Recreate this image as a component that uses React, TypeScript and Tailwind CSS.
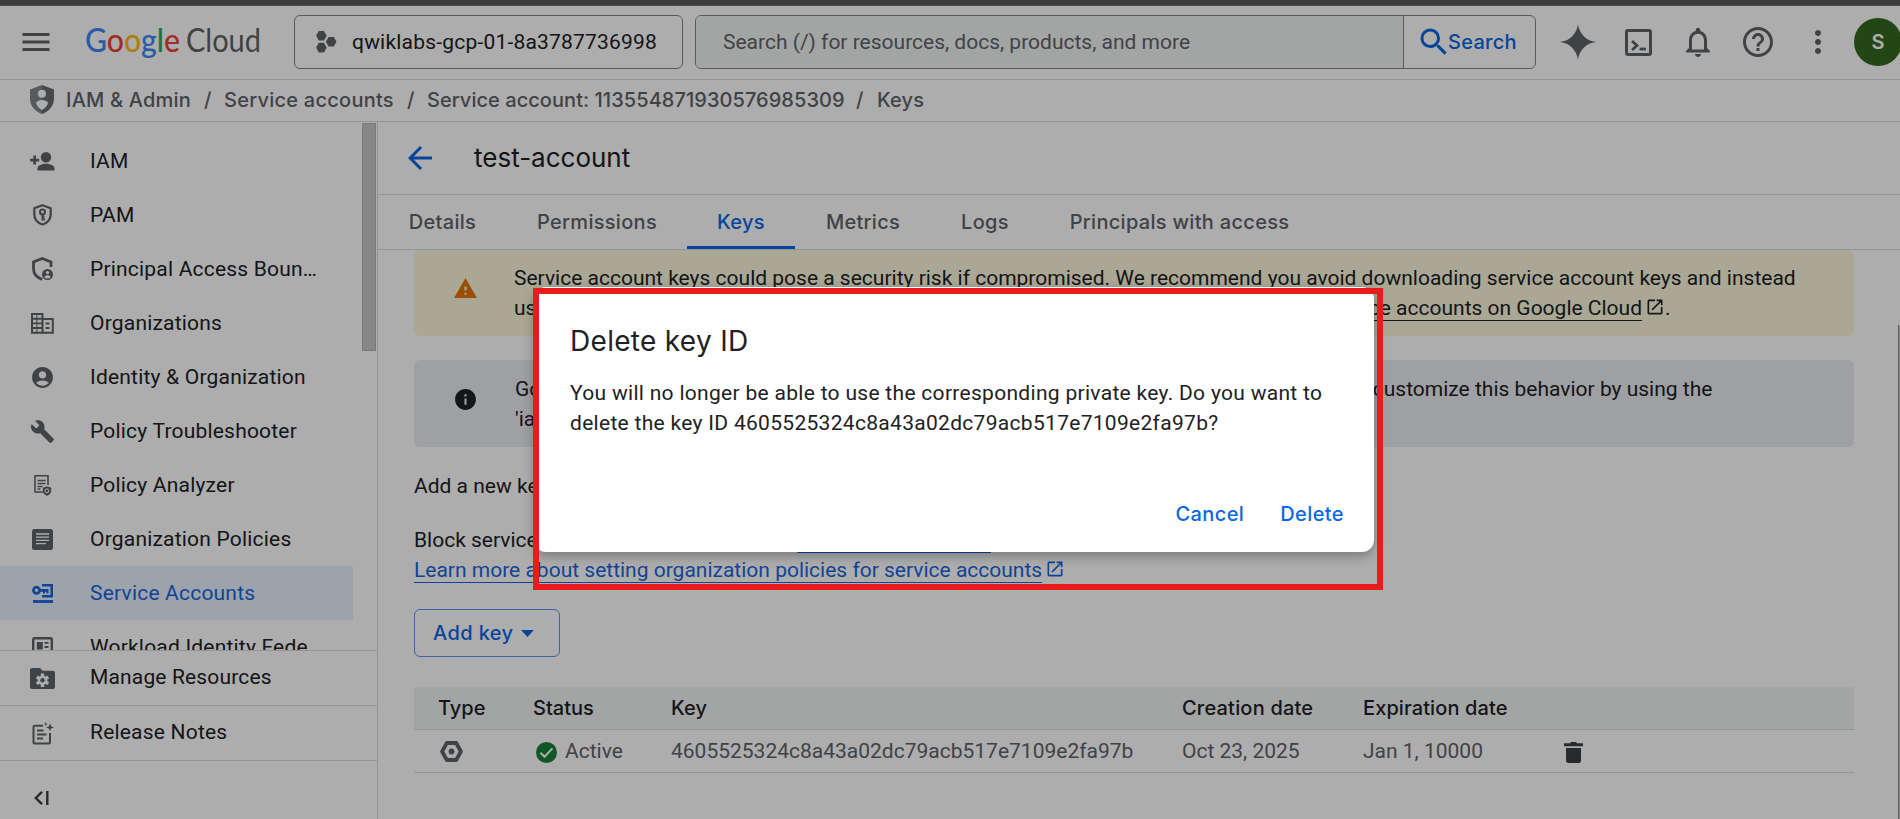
import type { ReactNode } from "react";
import {
  MdAccountCircle,
  MdArrowBack,
  MdBuild,
  MdHelpOutline,
  MdInfo,
  MdMenu,
  MdMoreVert,
  MdNotificationsNone,
  MdOpenInNew,
  MdSearch,
  MdWarning,
} from "react-icons/md";

function GoogleCloudLogo() {
  return (
    <svg width="180" height="44" viewBox="0 0 180 44" className="block">
      <g fontFamily="Lato, sans-serif" fontSize="32">
        <text x="-1" y="31.500" textLength="95" lengthAdjust="spacingAndGlyphs" fontWeight="500" stroke="none">
          <tspan fill="#4285f4">G</tspan>
          <tspan fill="#ea4335">o</tspan>
          <tspan fill="#fbbc04">o</tspan>
          <tspan fill="#4285f4">g</tspan>
          <tspan fill="#34a853">l</tspan>
          <tspan fill="#ea4335">e</tspan>
        </text>
        <text x="100" y="31.500" textLength="75" lengthAdjust="spacingAndGlyphs" fill="#5f6368">
          Cloud
        </text>
      </g>
    </svg>
  );
}

function ProjectIcon() {
  return (
    <svg width="21" height="22" viewBox="0 0 21 22" fill="#5f6368" className="block">
      <path d="M2.8 0h5.2l2.7 4.8-2.7 4.8H2.8L.1 4.8z" />
      <path d="M2.8 11.8h5.2l2.7 4.8-2.7 4.8H2.8L.1 16.6z" />
      <path d="M12.6 5.9h5.2l2.7 4.8-2.7 4.8h-5.2l-2.7-4.8z" />
    </svg>
  );
}

function SparkIcon() {
  return (
    <svg width="36" height="36" viewBox="0 0 36 36" fill="#5f6368" className="block">
      <path d="M18 0C18.9 9.4 26.6 17.1 36 18 26.6 18.9 18.9 26.6 18 36 17.1 26.6 9.4 18.9 0 18 9.4 17.1 17.1 9.4 18 0z" />
      <path d="M18 5.5C20 12.400 23.600 16 30.500 18 23.600 20 20 23.600 18 30.500 16 23.600 12.400 20 5.500 18 12.400 16 16 12.400 18 5.500z" />
    </svg>
  );
}

function TerminalIcon() {
  return (
    <svg width="27" height="27" viewBox="0 0 27 27" fill="none" stroke="#5f6368" className="block">
      <rect x="1.500" y="1.500" width="24" height="24" rx="1.500" strokeWidth="3" />
      <path d="M7 12l5 4.500-5 4.500" strokeWidth="2.800" />
      <path d="M14.500 20h6.500" strokeWidth="2.800" />
    </svg>
  );
}

function ShieldUserIcon() {
  return (
    <svg width="24" height="29" viewBox="0 0 24 29" className="block">
      <path d="M12 0L0 4.600v9.200C0 20.800 5 26.600 12 29z" fill="#80868b" />
      <path d="M12 0l12 4.600v9.200C24 20.800 19 26.600 12 29z" fill="#686d72" />
      <circle cx="12" cy="8.800" r="4" fill="#fff" />
      <path d="M6 17.800c1.200-1.800 3.400-2.800 6-2.800s4.800 1 6 2.800c-.8 3.200-2.800 5.600-6 7.200-3.200-1.600-5.200-4-6-7.200z" fill="#fff" />
    </svg>
  );
}

function IamIcon() {
  return (
    <svg width="25" height="19" viewBox="0 0 25 19" fill="#5f6368" className="block">
      <circle cx="16" cy="5.300" r="5.200" />
      <path d="M7.500 18.500v-2.300c0-2.800 4.600-4.400 8.500-4.400s8.500 1.600 8.500 4.400v2.300z" />
      <path d="M3.300 3.500h2.700v3.200h3.200v2.700H6v3.200H3.300V9.400H.1V6.700h3.200z" />
    </svg>
  );
}

function PamIcon() {
  return (
    <svg width="21" height="22" viewBox="0 0 21 22" fill="none" stroke="#5f6368" className="block">
      <path d="M10.500 1.200l8.200 3.100v6c0 4.800-3.300 8.700-8.200 10.200-4.900-1.500-8.200-5.400-8.200-10.200v-6z" strokeWidth="2.200" />
      <circle cx="10.500" cy="8" r="2.500" strokeWidth="2.100" />
      <path d="M10.500 10.500v6M10.500 15.500h2.500M10.500 12.800h2" strokeWidth="2" />
    </svg>
  );
}

function BoundaryIcon() {
  return (
    <svg width="21" height="24" viewBox="0 0 21 24" className="block">
      <path
        d="M19 10V5L10.200 1.500 1.500 5v6.500c0 5 3.300 9 8.700 11"
        fill="none"
        stroke="#5f6368"
        strokeWidth="2.800"
      />
      <circle cx="15.500" cy="17.500" r="5.500" fill="#5f6368" />
      <circle cx="15.500" cy="15.600" r="1.600" fill="#fff" />
      <path d="M12.300 20c.7-1.100 1.900-1.700 3.200-1.700s2.500.6 3.200 1.700c-.7 1-1.900 1.600-3.200 1.600s-2.500-.6-3.200-1.600z" fill="#fff" />
    </svg>
  );
}

function OrganizationsIcon() {
  return (
    <svg width="23" height="21" viewBox="0 0 23 21" fill="none" stroke="#5f6368" strokeWidth="2" className="block">
      <path d="M1 1h10.500v18.800H1zM11.500 6h10.300v13.800H11.500" />
      <path d="M2 5.800h9M2 10.400h9M2 15h9" strokeWidth="1.900" />
      <path d="M5.900 1v18.800" strokeWidth="1" />
      <path d="M14.500 10.400h4M14.500 15h4" />
    </svg>
  );
}

function AnalyzerIcon() {
  return (
    <svg width="21" height="22" viewBox="0 0 21 22" fill="none" stroke="#5f6368" className="block">
      <path d="M16 11V1.800H3V18h8" strokeWidth="1.600" />
      <path d="M5.500 6.500h8M5.500 9.500h8M5.500 12.500h5M5.500 15h3" strokeWidth="1.300" />
      <path d="M15 12.200l4.200 1.500v3c0 2.300-1.700 4.200-4.200 5-2.500-.8-4.200-2.700-4.200-5v-3z" fill="#5f6368" stroke="none" />
      <circle cx="15" cy="16.800" r="1.900" stroke="#fff" strokeWidth="1" />
    </svg>
  );
}

function PoliciesIcon() {
  return (
    <svg width="21" height="21" viewBox="0 0 21 21" className="block">
      <rect width="21" height="21" rx="2.500" fill="#5f6368" />
      <path d="M4 5h13M4 8.200h13M4 11.400h13M4 14.600h10" stroke="#fff" strokeWidth="1.300" />
    </svg>
  );
}

function ServiceAccountsIcon() {
  return (
    <svg width="21" height="19" viewBox="0 0 21 19" className="block">
      <path d="M10 1.300h9.700v10.900H10" fill="none" stroke="#1a65dc" strokeWidth="2.600" />
      <circle cx="4.500" cy="6.300" r="3.100" fill="none" stroke="#1a65dc" strokeWidth="2.700" />
      <path d="M7.500 5h9v4.500h-2V7.800h-1.500v1.700h-2V7.800H7.500z" fill="#1a65dc" />
      <path d="M1 17.500h20" stroke="#1a65dc" strokeWidth="2.800" />
    </svg>
  );
}

function WorkloadIcon() {
  return (
    <svg width="21" height="21" viewBox="0 0 21 21" className="block">
      <rect x="1.200" y="1.200" width="18.600" height="18.600" rx="1.500" fill="none" stroke="#5f6368" strokeWidth="2.400" />
      <rect x="4.800" y="5" width="6" height="7.500" fill="#5f6368" />
      <path d="M12.500 5.800h4M12.500 10h4" stroke="#5f6368" strokeWidth="1.800" />
    </svg>
  );
}

function FolderGearIcon() {
  return (
    <svg width="25" height="21" viewBox="0 0 25 21" className="block">
      <path d="M2 0h8l2.600 2.800H23a2 2 0 0 1 2 2V19a2 2 0 0 1-2 2H2a2 2 0 0 1-2-2V2a2 2 0 0 1 2-2z" fill="#5f6368" />
      <g stroke="#fff" strokeWidth="3.400">
        <path d="M12.500 5.600v13.400M6.700 8.950l11.600 6.700M18.300 8.950l-11.600 6.700" />
      </g>
      <circle cx="12.500" cy="12.300" r="4.600" fill="#fff" />
      <circle cx="12.500" cy="12.300" r="2.200" fill="#5f6368" />
    </svg>
  );
}

function ReleaseNotesIcon() {
  return (
    <svg width="22" height="23" viewBox="0 0 22 23" fill="none" stroke="#5f6368" className="block">
      <path d="M11 3.800H2.500a1 1 0 0 0-1 1V20.500a1 1 0 0 0 1 1h14.500a1 1 0 0 0 1-1V11" strokeWidth="2" />
      <path d="M5 8.500h6.500M5 12.500h9.500M5 16.500h6" strokeWidth="2" />
      <path d="M18 1.500l1.100 2.800 2.800 1.100-2.800 1.100L18 9.300l-1.100-2.800-2.800-1.100 2.800-1.100z" fill="#5f6368" stroke="none" />
      <path d="M13.800 0l.6 1.400 1.400.6-1.400.6-.6 1.400-.6-1.400-1.400-.6 1.400-.6z" fill="#5f6368" stroke="none" />
    </svg>
  );
}

function CollapseIcon() {
  return (
    <svg width="15" height="14" viewBox="0 0 15 14" fill="none" stroke="#3c4043" strokeWidth="2.400" className="block">
      <path d="M8 .8L1.800 7 8 13.200M13.300 0v14" />
    </svg>
  );
}

function KeyTypeIcon() {
  return (
    <svg width="23" height="21" viewBox="0 0 23 21" className="block">
      <path d="M6.800 2h9.400l4.700 8.500-4.700 8.500H6.800L2.100 10.500z" fill="none" stroke="#5f6368" strokeWidth="3.800" strokeLinejoin="round" />
      <circle cx="11.500" cy="10.500" r="2.900" fill="#5f6368" />
    </svg>
  );
}

function CheckIcon() {
  return (
    <svg width="21" height="21" viewBox="0 0 21 21" className="block">
      <circle cx="10.500" cy="10.500" r="10.500" fill="#188038" />
      <path d="M4.500 10.800l4 4 8-8.400" fill="none" stroke="#fff" strokeWidth="2" />
    </svg>
  );
}

function TrashIcon() {
  return (
    <svg width="19" height="21" viewBox="0 0 19 21" fill="#3c4043" className="block">
      <path d="M0 1.200h6L7 0h5l1 1.200h6v3H0z" />
      <path d="M2 6h15v12.500a2.500 2.500 0 0 1-2.500 2.500h-10A2.500 2.500 0 0 1 2 18.500z" />
    </svg>
  );
}

type NavItem = { label: string; icon: ReactNode; active?: boolean };

const navItems: NavItem[] = [
  { label: "IAM", icon: <IamIcon /> },
  { label: "PAM", icon: <PamIcon /> },
  { label: "Principal Access Boun…", icon: <BoundaryIcon /> },
  { label: "Organizations", icon: <OrganizationsIcon /> },
  { label: "Identity & Organization", icon: <MdAccountCircle size={25} /> },
  { label: "Policy Troubleshooter", icon: <MdBuild size={25} /> },
  { label: "Policy Analyzer", icon: <AnalyzerIcon /> },
  { label: "Organization Policies", icon: <PoliciesIcon /> },
  { label: "Service Accounts", icon: <ServiceAccountsIcon />, active: true },
  { label: "Workload Identity Fede…", icon: <WorkloadIcon /> },
];

function TopBar() {
  return (
    <header className="flex h-[74px] shrink-0 items-center border-b border-[#dadce0] bg-white pb-px text-[#5f6368]">
      <MdMenu size={36} className="ml-[18px] shrink-0" />
      <div className="ml-8 w-[180px] shrink-0">
        <GoogleCloudLogo />
      </div>
      <div className="ml-[28px] flex h-[54px] w-[389px] shrink-0 items-center rounded-md border border-[#80868b] pl-[21px]">
        <ProjectIcon />
        <span className="ml-[15px] text-[21px] leading-[30px] tracking-[0.2px] text-[#202124]">qwiklabs-gcp-01-8a3787736998</span>
      </div>
      <div className="ml-3 flex h-[54px] w-[841px] shrink-0 items-stretch overflow-hidden rounded-md border border-[#80868b]">
        <div className="flex flex-1 items-center bg-[#f1f3f4] pl-[27px] text-[21px] leading-[30px]">
          Search (/) for resources, docs, products, and more
        </div>
        <div className="flex w-[132px] items-center border-l border-[#80868b] pl-[12px] font-[Inter] text-[20px] font-medium text-[#0b66e4]">
          <MdSearch size={36} className="shrink-0" />
          <span className="-ml-[4px] leading-[30px] tracking-[0.3px]">Search</span>
        </div>
      </div>
      <div className="ml-[24px] flex shrink-0 items-center">
        <SparkIcon />
        <div className="ml-[29px]">
          <TerminalIcon />
        </div>
        <MdNotificationsNone size={36} className="ml-[28px]" />
        <MdHelpOutline size={36} className="ml-[24px]" />
        <MdMoreVert size={36} className="ml-[24px]" />
        <div className="ml-[18px] flex size-12 items-center justify-center rounded-full bg-[#33691e] font-[Inter] text-[20px] font-semibold text-white">
          S
        </div>
      </div>
    </header>
  );
}

function Breadcrumbs() {
  return (
    <nav className="flex h-[42px] shrink-0 items-center border-b border-[#dadce0] bg-white pb-0.5 pl-[30px] font-[Inter] text-[20px] leading-[30px] font-medium whitespace-pre text-[#5f6368]">
      <ShieldUserIcon />
      <span className="ml-3 w-[138px] tracking-[0.2px]">IAM &amp; Admin</span>
      <span className="w-5">/</span>
      <span className="w-[183px] tracking-[0.25px]">Service accounts</span>
      <span className="w-5">/</span>
      <span className="w-[429px] tracking-[0.05px]">Service account: 113554871930576985309</span>
      <span className="w-[21px]">/</span>
      <span className="tracking-[0.1px]">Keys</span>
    </nav>
  );
}

function Sidebar() {
  return (
    <aside className="flex w-[378px] shrink-0 flex-col border-r border-[#dadce0] bg-white text-[21px] leading-[30px] tracking-[0.2px] text-[#202124]">
      <div className="flex h-[528px] shrink-0 justify-between overflow-hidden pr-px">
        <ul className="w-[353px] pt-3">
          {navItems.map((item) => (
            <li
              key={item.label}
              className={
                item.active
                  ? "flex h-[54px] items-center bg-[#e8f0fe] text-[#1a65dc]"
                  : "flex h-[54px] items-center text-[#202124]"
              }
            >
              <span
                className={
                  item.active
                    ? "ml-[26px] flex w-[33px] justify-center"
                    : "ml-[26px] flex w-[33px] justify-center text-[#5f6368]"
                }
              >
                {item.icon}
              </span>
              <span className="ml-[31px] whitespace-nowrap">{item.label}</span>
            </li>
          ))}
        </ul>
        <div className="mt-px h-[228px] w-[14px] border border-[#b4b4b4] bg-[#c8c8c8]" />
      </div>
      <div className="flex h-[55px] shrink-0 items-center border-t border-[#dadce0]">
        <span className="ml-[26px] flex w-[33px] justify-center">
          <FolderGearIcon />
        </span>
        <span className="ml-[31px] pb-[3px] tracking-[0.15px]">Manage Resources</span>
      </div>
      <div className="flex h-[56px] shrink-0 items-center border-y border-[#dadce0]">
        <span className="ml-[26px] flex w-[33px] justify-center">
          <ReleaseNotesIcon />
        </span>
        <span className="ml-[31px] pb-[3px]">Release Notes</span>
      </div>
      <div className="pt-[30px] pl-[34px]">
        <CollapseIcon />
      </div>
    </aside>
  );
}

function Tabs() {
  return (
    <div className="flex h-[55px] shrink-0 border-b border-[#dadce0] text-center font-[Inter] text-[20px] leading-[54px] font-medium tracking-[0.3px] whitespace-nowrap text-[#5f6368]">
      <div className="w-[129px]">Details</div>
      <div className="w-[180px]">Permissions</div>
      <div className="h-[54px] w-[108px] border-b-[3px] border-[#0b66e4] text-[#0b66e4]">Keys</div>
      <div className="w-[136px]">Metrics</div>
      <div className="w-[108px]">Logs</div>
      <div className="w-[281px]">Principals with access</div>
    </div>
  );
}

function KeysTable() {
  return (
    <div className="mt-[30px] grid grid-cols-[24px_95px_138px_511px_181px_201px_1fr] text-[21px] leading-[42px] text-[#5f6368]">
      <div className="col-span-7 grid h-[43px] grid-cols-subgrid border-b border-[#dadce0] bg-[#f1f3f4] font-[Inter] text-[20px] font-medium text-[#202124]">
        <span />
        <span>Type</span>
        <span>Status</span>
        <span className="tracking-[0.1px]">Key</span>
        <span className="tracking-[0.2px]">Creation date</span>
        <span className="tracking-[0.1px]">Expiration date</span>
        <span />
      </div>
      <div className="col-span-7 grid h-[43px] grid-cols-subgrid border-b border-[#dadce0]">
        <span />
        <span className="flex items-center pl-0.5">
          <KeyTypeIcon />
        </span>
        <span className="flex items-center gap-2 pl-[3px]">
          <span className="pt-[3px]">
            <CheckIcon />
          </span>
          Active
        </span>
        <span>4605525324c8a43a02dc79acb517e7109e2fa97b</span>
        <span>Oct 23, 2025</span>
        <span>Jan 1, 10000</span>
        <span className="flex items-center pt-[3px]">
          <TrashIcon />
        </span>
      </div>
    </div>
  );
}

function Main() {
  return (
    <main className="flex min-w-0 flex-1 flex-col bg-white text-[21px] leading-[30px] text-[#202124]">
      <div className="flex h-[73px] shrink-0 items-center border-b border-[#dadce0] pl-6">
        <MdArrowBack size={36} className="text-[#0b66e4]" />
        <h1 className="ml-[36px] font-[Inter] text-[26px] leading-[36px]">test-account</h1>
      </div>
      <Tabs />
      <div className="flex min-h-0 flex-1 justify-between overflow-hidden pl-9">
        <div className="w-[1440px] shrink-0 whitespace-nowrap">
          <section className="flex h-[86px] items-start rounded-md bg-[#fcf7dc]">
            <MdWarning size={25} className="mt-[26px] ml-[39px] shrink-0 text-[#e37400]" />
            <p className="ml-[36px] pt-[13px]">
              Service account keys could pose a security risk if compromised. We recommend you avoid downloading service account keys and instead
              <br />
              use the Workload Identity Federation. You can learn about the{" "}
              <span className="underline decoration-1 underline-offset-[5px]">best way to authenticate service accounts on Google Cloud</span>
              <MdOpenInNew size={20} className="mb-1 ml-[3px] inline" />.
            </p>
          </section>
          <section className="mt-6 flex h-[87px] items-start rounded-md bg-[#ebecf2]">
            <MdInfo size={25} className="mt-[27px] ml-[39px] shrink-0" />
            <p className="ml-[37px] pt-[14px]">
              Google automatically disables service account keys detected in public repositories. You can customize this behavior by using the
              <br />
              'iam.serviceAccountKeyExposureResponse' organization policy.
            </p>
          </section>
          <p className="mt-6">Add a new key pair or upload a public key certificate from an existing key pair.</p>
          <p className="mt-6">
            Block service account key creation using{" "}
            <span className="text-[#1a65dc] underline decoration-1 underline-offset-[5px]">organization policies</span>.
            <br />
            <span className="text-[#1a65dc]">
              <span className="underline decoration-1 underline-offset-[5px]">
                Learn more about setting organization policies for service accounts
              </span>
              <MdOpenInNew size={20} className="mb-1 ml-[3px] inline" />
            </span>
          </p>
          <button className="mt-6 flex h-12 w-[146px] items-center rounded-md border border-[#5f94e8] pl-[18px] font-[Inter] text-[20px] font-medium tracking-[0.4px] text-[#0b66e4]">
            Add key
            <svg width="13" height="7" viewBox="0 0 13 7" fill="currentColor" className="ml-[7px]">
              <path d="M0 0h13L6.500 7z" />
            </svg>
          </button>
          <KeysTable />
        </div>
        <div className="mt-[75px] w-0.5 border-l border-[#8e8e8e] bg-[#cbcbcb]" />
      </div>
    </main>
  );
}

function DeleteDialog() {
  return (
    <div
      role="dialog"
      className="absolute top-[287px] left-[534px] flex h-[265px] w-[840px] flex-col rounded-xl bg-white px-9 pt-9 text-[21px] leading-[30px] text-[#202124] shadow-[0_4px_12px_rgba(0,0,0,0.3)]"
    >
      <h2 className="font-[Inter] text-[28px] leading-[36px] tracking-[0.3px]">Delete key ID</h2>
      <p className="mt-[19px] tracking-[0.3px] whitespace-nowrap">
        You will no longer be able to use the corresponding private key. Do you want to
        <br />
        delete the key ID 4605525324c8a43a02dc79acb517e7109e2fa97b?
      </p>
      <div className="mt-[61px] flex justify-end gap-[36px] font-[Inter] text-[20px] font-medium tracking-[0.4px] text-[#0b66e4]">
        <button>Cancel</button>
        <button className="-mr-[6px]">Delete</button>
      </div>
    </div>
  );
}

export default function App() {
  return (
    <div className="relative flex h-[819px] w-[1900px] flex-col overflow-hidden bg-white font-[Roboto]">
      <div className="h-1.5 shrink-0 border-b border-[#4f4c4d] bg-[#3c3c3c]" />
      <TopBar />
      <Breadcrumbs />
      <div className="flex min-h-0 flex-1">
        <Sidebar />
        <Main />
      </div>
      <div className="absolute inset-x-0 top-1.5 bottom-0 bg-black/32" />
      <DeleteDialog />
      <div className="absolute top-[288px] left-[533px] h-[302px] w-[850px] border-[6px] border-[#e81c1c]" />
    </div>
  );
}
